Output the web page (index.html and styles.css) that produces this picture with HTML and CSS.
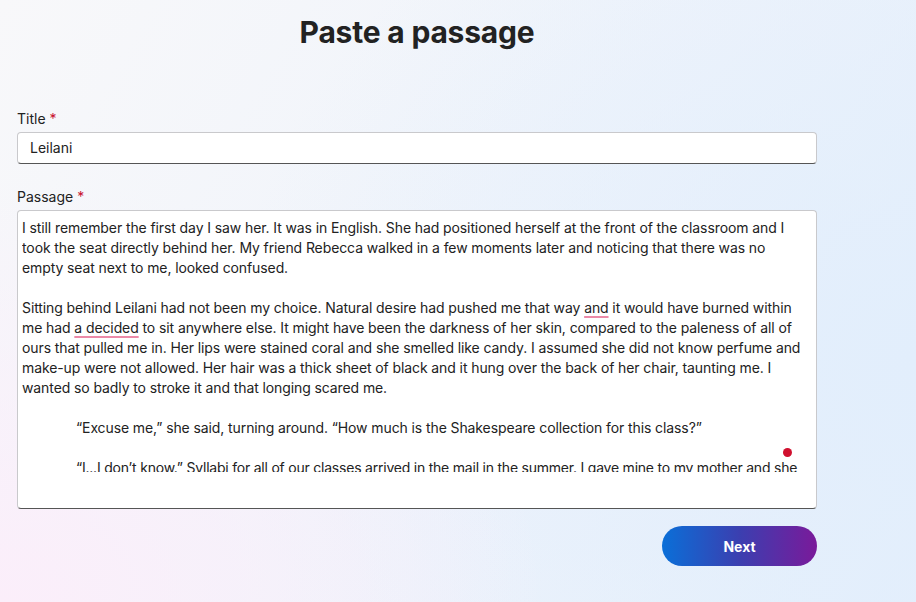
FILE: index.html
```html
<!DOCTYPE html>
<html>
<head>
<meta charset="utf-8">
<link rel="stylesheet" href="styles.css">
</head>
<body>
<main class="page">
  <h1 class="heading">Paste a passage</h1>
  <div class="field">
    <label class="label">Title <span class="req">*</span></label>
    <div class="input">Leilani</div>
  </div>
  <div class="field">
    <label class="label">Passage <span class="req">*</span></label>
    <div class="textarea">
      <div class="scroll">
        <p>I still remember the first day I saw her. It was in English. She had positioned herself at the front of the classroom and I took the seat directly behind her. My friend Rebecca walked in a few moments later and noticing that there was no empty seat next to me, looked confused.</p>
        <p>Sitting behind Leilani had not been my choice. Natural desire had pushed me that way <span class="mark">and</span> it would have burned within me had <span class="mark">a decided</span> to sit anywhere else. It might have been the darkness of her skin, compared to the paleness of all of ours that pulled me in. Her lips were stained coral and she smelled like candy. I assumed she did not know perfume and make-up were not allowed. Her hair was a thick sheet of black and it hung over the back of her chair, taunting me. I wanted so badly to stroke it and that longing scared me.</p>
        <p class="indent">“Excuse me,” she said, turning around. “How much is the Shakespeare collection for this class?”</p>
        <p class="indent tight">“I...I don’t know.” Syllabi for all of our classes arrived in the mail in the summer. I gave mine to my mother and she</p>
      </div>
      <span class="dot"></span>
    </div>
  </div>
  <div class="actions">
    <button class="next">Next</button>
  </div>
</main>
</body>
</html>
```
FILE: styles.css
```css
* { box-sizing: border-box; }
html, body { margin: 0; height: 100%; }
body {
  font-family: Inter, "Noto Sans", sans-serif;
  color: #222;
  background:
    radial-gradient(ellipse 60% 70% at 0% 100%, #fbeefa 0%, rgba(251,238,250,0) 100%),
    radial-gradient(ellipse 75% 95% at 100% 60%, #e2eefc 0%, rgba(226,238,252,0) 100%),
    linear-gradient(120deg, #f8f8fa 0%, #eef3fb 60%, #e4effc 100%);
  overflow: hidden;
}
.page {
  width: 800px;
  margin-left: 17px;
  padding-top: 14px;
}
.heading {
  margin: 0;
  text-align: center;
  font-size: 30px;
  font-weight: 700;
  line-height: 36px;
  color: #222;
  letter-spacing: -0.2px;
}
.field { display: flex; flex-direction: column; }
.field:first-of-type { margin-top: 59px; }
.field + .field { margin-top: 23px; }
.label {
  font-size: 14px;
  line-height: 20px;
  color: #222;
  margin-bottom: 3px;
}
.req { color: #c8102e; }
.input {
  height: 32px;
  background: #fff;
  border: 1px solid #c9c9cc;
  border-bottom-color: #555;
  border-radius: 4px;
  padding: 0 12px;
  font-size: 14px;
  line-height: 30px;
  color: #222;
}
.textarea {
  position: relative;
  height: 299px;
  background: #fff;
  border: 1px solid #c9c9cc;
  border-bottom-color: #555;
  border-radius: 4px;
  padding: 7px 9px 0 4px;
}
.scroll {
  height: 254px;
  overflow: hidden;
  font-size: 14px;
  line-height: 20px;
  letter-spacing: -0.1px;
  color: #222;
}
.scroll p { margin: 0 0 20px; }
.scroll p.indent { text-indent: 54px; }
.scroll p.tight { letter-spacing: -0.22px; }
.mark {
  text-decoration: underline;
  text-decoration-color: #ec8aa8;
  text-decoration-thickness: 2px;
  text-underline-offset: 3px;
}
.dot {
  position: absolute;
  left: 765px;
  top: 237px;
  width: 9px;
  height: 9px;
  border-radius: 50%;
  background: #d0102e;
}
.actions {
  display: flex;
  justify-content: flex-end;
  margin-top: 17px;
}
.next {
  width: 155px;
  height: 40px;
  border: none;
  border-radius: 20px;
  background: linear-gradient(90deg, #0a6fd8 0%, #3b3fb0 50%, #7a1a9a 100%);
  color: #fff;
  font-family: Inter, "Noto Sans", sans-serif;
  font-size: 14px;
  font-weight: 700;
}
```
